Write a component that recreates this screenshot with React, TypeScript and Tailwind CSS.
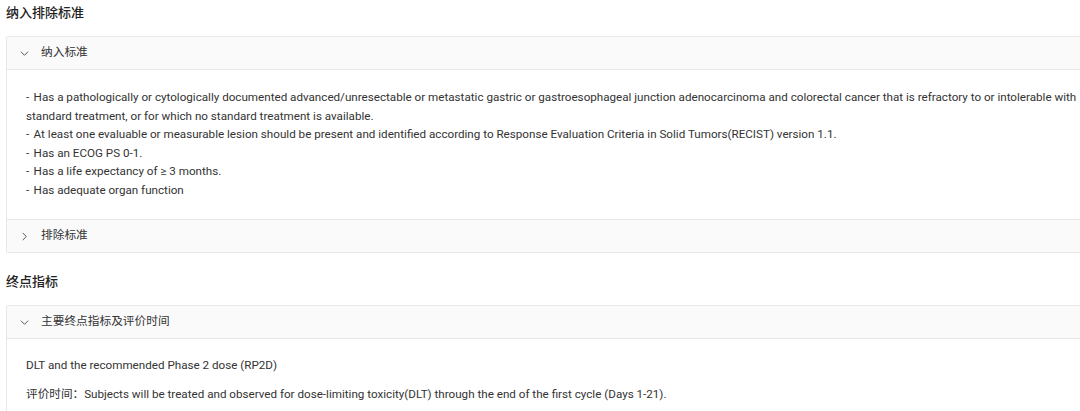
import React from "react";

function Chevron({ open }: { open: boolean }) {
  return (
    <svg
      width="9"
      height="9"
      viewBox="0 0 10 10"
      fill="none"
      stroke="#555"
      strokeWidth="1.1"
      className={open ? "" : "-rotate-90"}
    >
      <path d="M1 3 L5 7 L9 3" />
    </svg>
  );
}

function Header({ title, open }: { title: string; open: boolean }) {
  return (
    <div className="flex h-[32px] items-center bg-[#fafafa] pl-[13px] text-[11.7px] text-[#333]">
      <span className="flex w-[21px] items-center">
        <Chevron open={open} />
      </span>
      <span>{title}</span>
    </div>
  );
}

function Item({ children }: { children: React.ReactNode }) {
  return (
    <div>
      -<span className="ml-[1.5px]"> </span>
      {children}
    </div>
  );
}

export default function App() {
  return (
    <div
      className="w-[1080px] h-[411px] overflow-hidden bg-white text-[#333]"
      style={{ fontFamily: 'Roboto, "Noto Sans CJK SC", sans-serif' }}
    >
      <div className="w-[1110px] pl-[6px]">
        <div className="h-[36px] pt-[4px] text-[13px] font-medium leading-[18px] text-[#222]">
          纳入排除标准
        </div>
        <div className="rounded-[2px] border border-[#e8e8e8]">
          <Header title="纳入标准" open={true} />
          <div className="border-t border-[#e8e8e8] px-[19px] pt-[18px] pb-[20px] text-[11.65px] leading-[18.5px] text-[#333]">
            <Item>
              Has a pathologically or cytologically documented advanced/unresectable or metastatic gastric or gastroesophageal junction adenocarcinoma and colorectal cancer that is refractory to or intolerable with
              <br />
              standard treatment, or for which no standard treatment is available.
            </Item>
            <Item>
              At least one evaluable or measurable lesion should be present and identified according to Response Evaluation Criteria in Solid Tumors(RECIST) version 1.1.
            </Item>
            <Item>Has an ECOG PS 0-1.</Item>
            <Item>Has a life expectancy of ≥ 3 months.</Item>
            <Item>Has adequate organ function</Item>
          </div>
          <div className="border-t border-[#e8e8e8]">
            <Header title="排除标准" open={false} />
          </div>
        </div>
        <div className="h-[52px] pt-[20px] text-[13px] font-medium leading-[18px] text-[#222]">
          终点指标
        </div>
        <div className="rounded-[2px] border border-[#e8e8e8]">
          <Header title="主要终点指标及评价时间" open={true} />
          <div className="border-t border-[#e8e8e8] px-[19px] pt-[17px] pb-[20px] text-[11.65px] leading-[18.5px] text-[#333]">
            <div className="mb-[10px]">DLT and the recommended Phase 2 dose (RP2D)</div>
            <div>
              评价时间：Subjects will be treated and observed for dose-limiting toxicity(DLT) through the end of the first cycle (Days 1-21).
            </div>
          </div>
        </div>
      </div>
    </div>
  );
}
